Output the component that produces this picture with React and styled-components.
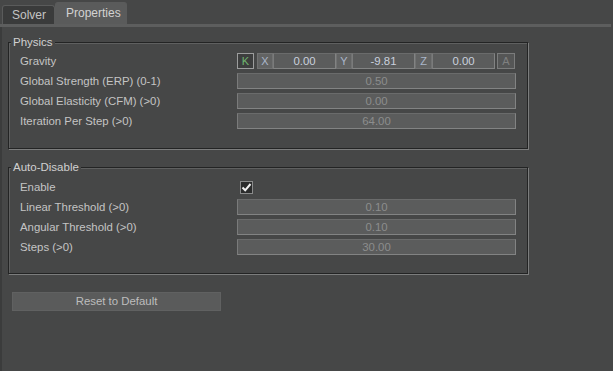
import React from "react";
import styled, { createGlobalStyle } from "styled-components";

const Global = createGlobalStyle`
  html, body { margin: 0; padding: 0; background: #464747; }
  body { font-family: "Liberation Sans", Arial, sans-serif; font-size: 11px; }
`;

const Window = styled.div`
  width: 613px;
  height: 371px;
  background: #464747;
  color: #c6c6c6;
  display: flex;
  flex-direction: column;
  overflow: hidden;
`;

const TabBar = styled.div`
  display: flex;
  align-items: flex-end;
  height: 24px;
  padding-left: 2px;
  width: 609px;
  border-bottom: 3px solid #5d5e5e;
`;

const Tab = styled.div`
  box-sizing: border-box;
  height: ${(p) => (p.$active ? "22px" : "19px")};
  width: ${(p) => p.$w}px;
  padding-left: ${(p) => (p.$active ? "10px" : "9px")};
  line-height: ${(p) => (p.$active ? "20px" : "18px")};
  background: ${(p) => (p.$active ? "#5a5b5b" : "#3a3b3b")};
  border: 1px solid #5a5b5b;
  border-bottom: none;
  border-radius: 3px 3px 0 0;
  color: ${(p) => (p.$active ? "#d2d2d2" : "#c4c4c4")};
  font-size: 12px;
`;

const Pane = styled.div`
  flex: 1;
  border-left: 2px solid #3b3c3c;
  padding: 15px 0 0 6px;
  display: flex;
  flex-direction: column;
`;

const Group = styled.div`
  box-sizing: border-box;
  width: 520px;
  border: 1px solid #232424;
  box-shadow: 1px 1px 0 #7c7d7d, inset 1px 1px 0 #5f6060;
  padding: 0 11px ${(p) => p.$pb}px 11px;
  margin-bottom: ${(p) => p.$mb}px;
`;

const Legend = styled.div`
  width: fit-content;
  height: 13px;
  line-height: 13px;
  margin: -7px 0 ${(p) => p.$gap}px -9px;
  padding: 0 2px;
  background: #464747;
  color: #d0d0d0;
  font-size: 11.5px;
`;

const Row = styled.div`
  display: grid;
  grid-template-columns: 217px 279px;
  height: 20px;
  align-items: center;
`;

const Label = styled.div`
  color: #c4c4c4;
  font-size: 11.4px;
  white-space: nowrap;
`;

const Field = styled.div`
  box-sizing: border-box;
  height: 16px;
  width: ${(p) => (p.$w ? `${p.$w}px` : "279px")};
  background: #5b5c5c;
  border: 1px solid #828383;
  border-top-color: #6a6b6b;
  border-left-color: #7a7b7b;
  color: ${(p) => (p.$bright ? "#c9d0dc" : "#8c8d8d")};
  text-align: center;
  line-height: 14px;
  font-size: 11.4px;
`;

const Vector = styled.div`
  display: flex;
  align-items: center;
  height: 16px;
`;

const KeyButton = styled.div`
  box-sizing: border-box;
  width: 17px;
  height: 16px;
  margin-right: 3px;
  background: #3d3e3e;
  border: 1px solid #9c9d9d;
  color: #6fb56f;
  font-size: 11px;
  line-height: 14px;
  text-align: center;
`;

const Axis = styled.div`
  box-sizing: border-box;
  width: ${(p) => p.$w}px;
  height: 16px;
  background: #626363;
  border: 1px solid #717272;
  color: #aab6ca;
  font-size: 11px;
  line-height: 14px;
  text-align: center;
`;

const AnimButton = styled.div`
  box-sizing: border-box;
  width: 18px;
  height: 16px;
  margin-left: 2px;
  background: #555656;
  border: 1px solid #7b7c7c;
  color: #7f8080;
  font-size: 11px;
  line-height: 14px;
  text-align: center;
`;

const Check = styled.div`
  box-sizing: border-box;
  width: 13px;
  height: 13px;
  margin-left: 3px;
  background: #2b2c2c;
  border: 1px solid #8a8b8b;
  display: flex;
  align-items: center;
  justify-content: center;
`;

const ResetButton = styled.div`
  box-sizing: border-box;
  width: 209px;
  height: 19px;
  margin-left: 4px;
  background: #5a5b5b;
  border: 1px solid #606161;
  color: #bdbdbd;
  text-align: center;
  line-height: 17px;
  font-size: 11.4px;
`;

const FieldRow = ({ label, value }) => (
  <Row>
    <Label>{label}</Label>
    <Field>{value}</Field>
  </Row>
);

export default function App() {
  return (
    <>
      <Global />
      <Window>
        <TabBar>
          <Tab $w={53}>Solver</Tab>
          <Tab $w={72} $active>
            Properties
          </Tab>
        </TabBar>
        <Pane>
          <Group $pb={17} $mb={18}>
            <Legend $gap={2}>Physics</Legend>
            <Row>
              <Label>Gravity</Label>
              <Vector>
                <KeyButton>K</KeyButton>
                <Axis $w={16}>X</Axis>
                <Field $w={63} $bright>0.00</Field>
                <Axis $w={16}>Y</Axis>
                <Field $w={63} $bright>-9.81</Field>
                <Axis $w={17}>Z</Axis>
                <Field $w={63} $bright>0.00</Field>
                <AnimButton>A</AnimButton>
              </Vector>
            </Row>
            <FieldRow label="Global Strength (ERP) (0-1)" value="0.50" />
            <FieldRow label="Global Elasticity (CFM) (>0)" value="0.00" />
            <FieldRow label="Iteration Per Step (>0)" value="64.00" />
          </Group>
          <Group $pb={16} $mb={18}>
            <Legend $gap={3}>Auto-Disable</Legend>
            <Row>
              <Label>Enable</Label>
              <Check>
                <svg width="11" height="11" viewBox="0 0 11 11">
                  <path
                    d="M1.5 5.5 L4.2 8.3 L9.5 2"
                    fill="none"
                    stroke="#f2f2f2"
                    strokeWidth="2"
                  />
                </svg>
              </Check>
            </Row>
            <FieldRow label="Linear Threshold (>0)" value="0.10" />
            <FieldRow label="Angular Threshold (>0)" value="0.10" />
            <FieldRow label="Steps (>0)" value="30.00" />
          </Group>
          <ResetButton>Reset to Default</ResetButton>
        </Pane>
      </Window>
    </>
  );
}
